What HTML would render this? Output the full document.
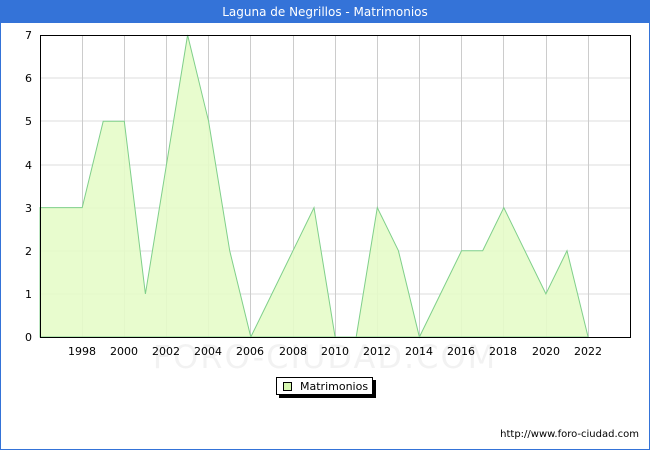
<!DOCTYPE html>
<html><head><meta charset="utf-8"><style>
body{margin:0;width:650px;height:450px;overflow:hidden;background:#fff;font-family:"DejaVu Sans","Liberation Sans",sans-serif}
</style></head><body>
<svg width="650" height="450" xmlns="http://www.w3.org/2000/svg" font-family="DejaVu Sans, Liberation Sans, sans-serif">
<rect x="0.5" y="0.5" width="649" height="449" fill="#fff" stroke="#3473d8"/>
<rect x="0" y="0" width="650" height="23" fill="#3473d8"/>
<text x="325" y="16" text-anchor="middle" font-size="12" fill="#fff">Laguna de Negrillos - Matrimonios</text>
<g stroke="#ddd" stroke-width="1">
<line x1="40" y1="294" x2="630" y2="294"/><line x1="40" y1="251" x2="630" y2="251"/><line x1="40" y1="208" x2="630" y2="208"/><line x1="40" y1="165" x2="630" y2="165"/><line x1="40" y1="121" x2="630" y2="121"/><line x1="40" y1="78" x2="630" y2="78"/>
</g>
<g stroke="#ccc" stroke-width="1">
<line x1="82.5" y1="35" x2="82.5" y2="337"/><line x1="124.5" y1="35" x2="124.5" y2="337"/><line x1="166.5" y1="35" x2="166.5" y2="337"/><line x1="208.5" y1="35" x2="208.5" y2="337"/><line x1="250.5" y1="35" x2="250.5" y2="337"/><line x1="293.5" y1="35" x2="293.5" y2="337"/><line x1="335.5" y1="35" x2="335.5" y2="337"/><line x1="377.5" y1="35" x2="377.5" y2="337"/><line x1="419.5" y1="35" x2="419.5" y2="337"/><line x1="461.5" y1="35" x2="461.5" y2="337"/><line x1="503.5" y1="35" x2="503.5" y2="337"/><line x1="546.5" y1="35" x2="546.5" y2="337"/><line x1="588.5" y1="35" x2="588.5" y2="337"/>
</g>
<polygon fill="#e6fcc9" fill-opacity="0.9" stroke="#7fcf8a" stroke-width="1" points="40,337 40,207.6 61.1,207.6 82.2,207.6 103.2,121.3 124.3,121.3 145.4,293.9 166.5,164.4 187.6,35 208.6,121.3 229.7,250.7 250.8,337 271.9,293.9 293,250.7 314,207.6 335.1,337 356.2,337 377.3,207.6 398.4,250.7 419.4,337 440.5,293.9 461.6,250.7 482.7,250.7 503.8,207.6 524.8,250.7 545.9,293.9 567,250.7 588.1,337"/>
<text x="325" y="368" text-anchor="middle" font-size="32" fill="#000" fill-opacity="0.05" letter-spacing="2">FORO-CIUDAD.COM</text>
<rect x="40.5" y="35.5" width="590" height="302" fill="none" stroke="#000"/>
<g font-size="11" fill="#000" text-anchor="end">
<text x="32" y="341">0</text><text x="32" y="298">1</text><text x="32" y="255">2</text><text x="32" y="212">3</text><text x="32" y="169">4</text><text x="32" y="125">5</text><text x="32" y="82">6</text><text x="32" y="39">7</text>
</g>
<g font-size="11" fill="#000" text-anchor="middle">
<text x="82" y="355">1998</text><text x="124" y="355">2000</text><text x="166" y="355">2002</text><text x="208" y="355">2004</text><text x="250" y="355">2006</text><text x="293" y="355">2008</text><text x="335" y="355">2010</text><text x="377" y="355">2012</text><text x="419" y="355">2014</text><text x="461" y="355">2016</text><text x="503" y="355">2018</text><text x="546" y="355">2020</text><text x="588" y="355">2022</text>
</g>
<rect x="279" y="380" width="97" height="18" fill="#000"/>
<rect x="276.5" y="377.5" width="96" height="17" fill="#fff" stroke="#000"/>
<rect x="283.5" y="382.5" width="8" height="8" fill="#d6f7b0" stroke="#000"/>
<text x="300" y="390" font-size="11" fill="#000">Matrimonios</text>
<text x="639" y="437" text-anchor="end" font-size="10" fill="#000">http://www.foro-ciudad.com</text>
</svg>
</body></html>
